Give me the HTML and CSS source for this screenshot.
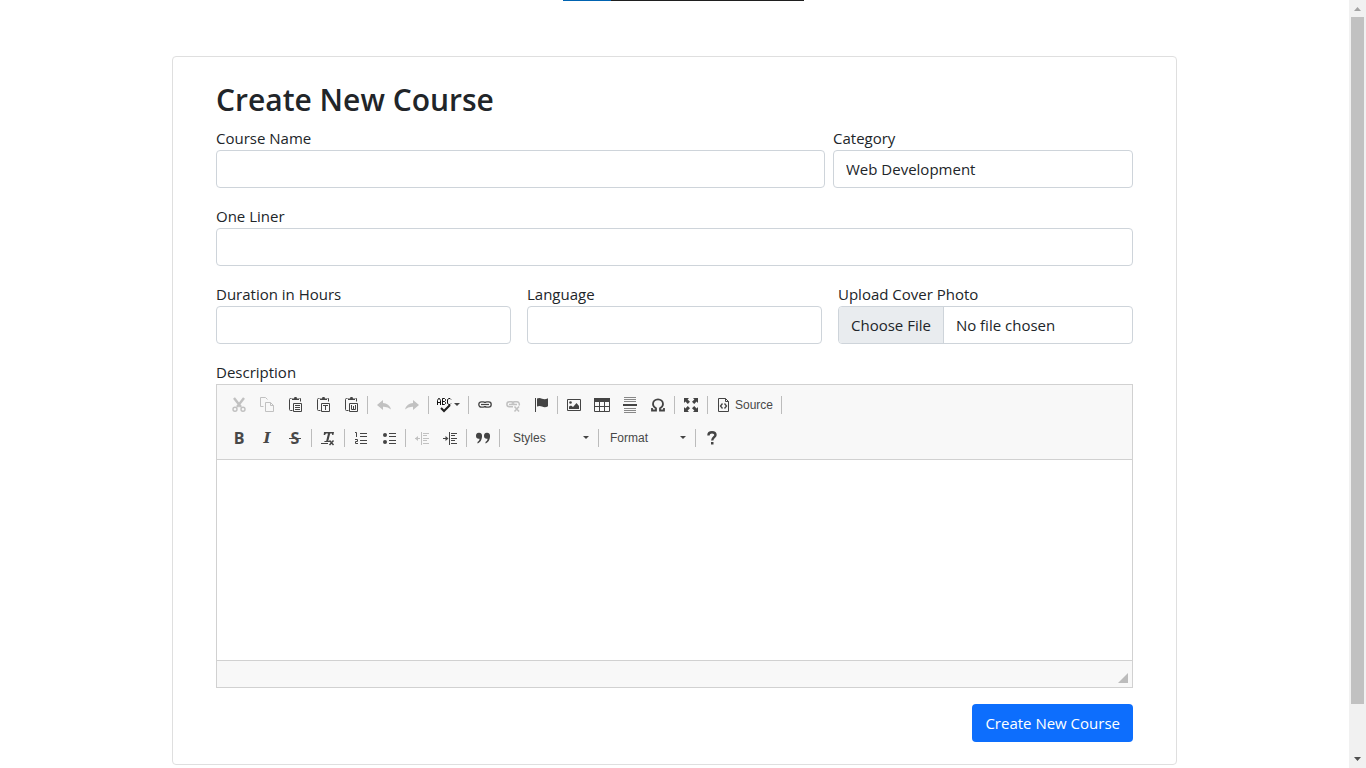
FILE: index.html
```html
<!DOCTYPE html>
<html lang="en">
<head>
<meta charset="utf-8">
<meta name="viewport" content="width=device-width, initial-scale=1">
<title>Create New Course</title>
<link rel="stylesheet" href="styles.css">
</head>
<body>
<div class="top-strip"></div>
<main class="page">
  <form class="card">
    <h2 class="title">Create New Course</h2>
    <div class="row row-name">
      <div class="field">
        <label for="name">Course Name</label>
        <input class="control" id="name" type="text">
      </div>
      <div class="field">
        <label for="category">Category</label>
        <select class="control" id="category"><option>Web Development</option></select>
      </div>
    </div>
    <div class="row">
      <div class="field">
        <label for="liner">One Liner</label>
        <input class="control" id="liner" type="text">
      </div>
    </div>
    <div class="row row-thirds">
      <div class="field">
        <label for="duration">Duration in Hours</label>
        <input class="control" id="duration" type="text">
      </div>
      <div class="field">
        <label for="language">Language</label>
        <input class="control" id="language" type="text">
      </div>
      <div class="field">
        <label for="cover">Upload Cover Photo</label>
        <input class="control" id="cover" type="file">
      </div>
    </div>
    <div class="field">
      <label for="description">Description</label>
      <div class="editor">
        <div class="toolbar">
          <div class="tools">
            <button type="button" class="tool" aria-label="Cut" disabled><svg class="icon" viewBox="0 0 16 16"><path d="M3 1l7 9M13 1L6 10" fill="none" stroke="#444" stroke-width="2.4"/><circle cx="4" cy="12.3" r="2" fill="none" stroke="#444" stroke-width="1.4"/><circle cx="12" cy="12.3" r="2" fill="none" stroke="#444" stroke-width="1.4"/></svg></button>
            <button type="button" class="tool" aria-label="Copy" disabled><svg class="icon" viewBox="0 0 16 16"><path d="M4.500 9.500h-3v-9h5l2 2M6.500 5.500h5l3 3v6h-8zM11.500 5.500v3h3" fill="none" stroke="#444"/></svg></button>
            <button type="button" class="tool" aria-label="Paste"><svg class="icon" viewBox="0 0 16 16"><path d="M4.500 1.500h-1q-1 0-1 1v10q0 1 1 1h2M12.500 1.500h1v3" fill="none" stroke="#444"/><path d="M5 3V1.500h2L7.500 0h2L10 1.500h2V3z" fill="#444"/><path d="M6.500 6.500h8v8h-8zM8 8.500h5M8 10.500h5M8 12.500h5" fill="#f8f8f8" stroke="#444"/></svg></button>
            <button type="button" class="tool" aria-label="Paste as plain text"><svg class="icon" viewBox="0 0 16 16"><path d="M4.500 1.500h-1q-1 0-1 1v10q0 1 1 1h2M12.500 1.500h1v3" fill="none" stroke="#444"/><path d="M5 3V1.500h2L7.500 0h2L10 1.500h2V3z" fill="#444"/><path d="M6.500 6.500h8v8h-8zM8 8.500h5M10.500 8v5" fill="#f8f8f8" stroke="#444"/></svg></button>
            <button type="button" class="tool" aria-label="Paste from Word"><svg class="icon" viewBox="0 0 16 16"><path d="M4.500 1.500h-1q-1 0-1 1v10q0 1 1 1h2M12.500 1.500h1v3" fill="none" stroke="#444"/><path d="M5 3V1.500h2L7.500 0h2L10 1.500h2V3z" fill="#444"/><path d="M6.500 6.500h8v8h-8z" fill="#f8f8f8" stroke="#444"/><path d="M8.500 8v4.500h4V8M10.500 9v3" fill="none" stroke="#444"/></svg></button>
            <span class="sep"></span>
            <button type="button" class="tool" aria-label="Undo" disabled><svg class="icon" viewBox="0 0 16 16"><path d="M1 8l6-5v3q6 0 8 6.500Q12 9.500 7 9.800V13z" fill="#444"/></svg></button>
            <button type="button" class="tool" aria-label="Redo" disabled><svg class="icon" viewBox="0 0 16 16"><path d="M15 8L9 3v3q-6 0-8 6.500Q4 9.500 9 9.800V13z" fill="#444"/></svg></button>
            <span class="sep"></span>
            <button type="button" class="tool tool-menu" aria-label="Spell check"><svg class="icon" viewBox="0 0 16 16"><path d="M.5 8V3.500l1-2h1l1 2V8M1 5.500h2M5.500 8V1.500h2l1 1v1l-1 1h-2m2 0l1 1v1l-1 1h-2M14 2.500l-1-1h-1l-1.500 1v4l1.500 1h1l1-1" fill="none" stroke="#111"/><path d="M4 11l3 3 6-6" fill="none" stroke="#222" stroke-width="2"/></svg><svg class="caret" viewBox="0 0 6 4"><path d="M0 0h6L3 3z" fill="#444"/></svg></button>
            <span class="sep"></span>
            <button type="button" class="tool" aria-label="Link"><svg class="icon" viewBox="0 0 16 16"><rect x="1.800" y="4.800" width="7" height="5.400" rx="2.600" fill="none" stroke="#444" stroke-width="1.300"/><rect x="7.200" y="4.800" width="7" height="5.400" rx="2.600" fill="none" stroke="#444" stroke-width="1.300"/><path d="M4 7.500h8" stroke="#f8f8f8" stroke-width="3"/><path d="M4 7.500h8" stroke="#444" stroke-width="1.200"/></svg></button>
            <button type="button" class="tool" aria-label="Unlink" disabled><svg class="icon" viewBox="0 0 16 16"><path d="M8 9.800H4.400a2.500 2.500 0 010-5h2.200a2.500 2.500 0 012.300 1.700M7 6.500a2.500 2.500 0 012.300-1.700h2.200a2.500 2.500 0 012.500 3.700M4 7.400h8" fill="none" stroke="#444" stroke-width="1.500"/><path d="M9.500 9.500l4.500 5M14 9.500l-4.500 5" stroke="#444" stroke-width="1.500"/></svg></button>
            <button type="button" class="tool" aria-label="Anchor"><svg class="icon" viewBox="0 0 16 16"><path d="M2 1h1v14H2zM4 1.500q2.500-1.200 5 .3 3 1.200 6-.5v8q-3 1.600-6 .2-2.500-1.200-5 0z" fill="#444"/></svg></button>
            <span class="sep"></span>
            <button type="button" class="tool" aria-label="Image"><svg class="icon" viewBox="0 0 16 16"><path d="M1.500 2.500h13v11h-13z" fill="none" stroke="#444"/><path d="M3 12V9.500l2-1 2 1.500 3.500-4L13 9v3z" fill="#444"/><circle cx="4.500" cy="5.500" r="1.300" fill="#444"/></svg></button>
            <button type="button" class="tool" aria-label="Table"><svg class="icon" viewBox="0 0 16 16"><path d="M0 1h16v4H0z" fill="#444"/><path d="M.5 4.500h15v10H.5zM5.500 5v9M10.500 5v9M1 9.500h14" fill="none" stroke="#444"/></svg></button>
            <button type="button" class="tool" aria-label="Horizontal line"><svg class="icon" viewBox="0 0 16 16"><path d="M2 .5h12M2 2.500h12M2 4.500h12M2 11.500h12M2 13.500h12M2 15.500h12" stroke="#888"/><path d="M1 7h14v2H1z" fill="#444"/></svg></button>
            <button type="button" class="tool" aria-label="Special character"><svg class="icon" viewBox="0 0 16 16"><path d="M2 11v2.500h4v-2.200C3.700 10 3 8.500 3 7c0-2.800 2.200-4.700 5-4.700S13 4.200 13 7c0 1.500-.7 3-3 4.300v2.200h4V11" fill="none" stroke="#444" stroke-width="1.800"/></svg></button>
            <span class="sep"></span>
            <button type="button" class="tool" aria-label="Maximize"><svg class="icon" viewBox="0 0 16 16"><path d="M1 1h5L4.600 2.400 7 4.800 4.800 7 2.400 4.600 1 6zM15 1v5l-1.400-1.400L11.200 7 9 4.800l2.400-2.400L10 1zM1 15v-5l1.400 1.400L4.800 9 7 11.200l-2.400 2.400L6 15zM15 15h-5l1.400-1.400L9 11.200 11.200 9l2.400 2.400L15 10z" fill="#444"/></svg></button>
            <span class="sep"></span>
            <button type="button" class="tool tool-text"><svg class="icon" viewBox="0 0 16 16"><path d="M2.500 1.500h7l3 3v10h-10zM9.500 1.500v3h3" fill="none" stroke="#444"/><path d="M6.500 6.500L4.500 9l2 2.500M8.500 6.500l2 2.500-2 2.500" fill="none" stroke="#444" stroke-width="1.300"/></svg>Source</button>
            <span class="sep"></span>
          </div>
          <div class="tools">
            <button type="button" class="tool glyph">B</button>
            <button type="button" class="tool glyph italic">I</button>
            <button type="button" class="tool glyph"><span class="strike">S</span></button>
            <span class="sep"></span>
            <button type="button" class="tool" aria-label="Remove format"><svg class="icon" viewBox="0 0 16 16"><path d="M4 2h10l-.6 3h-1.200L12 3.500h-1.800L8.300 11H10l-.2 1H4.300l.2-1h1.700L8 3.500H6L5 5H3.700zM1 13h7v1H1z" fill="#444"/><path d="M9.500 10.500l4 4.500M13.500 10.500l-4 4.500" stroke="#444" stroke-width="1.500"/></svg></button>
            <span class="sep"></span>
            <button type="button" class="tool" aria-label="Numbered list"><svg class="icon" viewBox="0 0 16 16"><path d="M7 3.500h7M7 6.500h7M7 10.500h7M7 13.500h7M2 2.500h1.500V7M2 9.500h2.500v2h-2v2H5" fill="none" stroke="#444"/></svg></button>
            <button type="button" class="tool" aria-label="Bulleted list"><svg class="icon" viewBox="0 0 16 16"><circle cx="4" cy="5" r="2" fill="#444"/><circle cx="4" cy="12" r="2" fill="#444"/><path d="M8 3.500h7M8 6.500h7M8 10.500h7M8 13.500h7" stroke="#444"/></svg></button>
            <span class="sep"></span>
            <button type="button" class="tool" aria-label="Decrease indent" disabled><svg class="icon" viewBox="0 0 16 16"><path d="M7.500 2v13M9 3.500h6M9 5.500h4M9 8.500h6M9 10.500h4M9 13.500h6M1 8.500h5" stroke="#444"/><path d="M1 8.500L4 6v5z" fill="#444"/></svg></button>
            <button type="button" class="tool" aria-label="Increase indent"><svg class="icon" viewBox="0 0 16 16"><path d="M7.500 2v13M9 3.500h6M9 5.500h4M9 8.500h6M9 10.500h4M9 13.500h6M1 8.500h4" stroke="#444"/><path d="M6.500 8.500l-3-2.500v5z" fill="#444"/></svg></button>
            <span class="sep"></span>
            <button type="button" class="tool" aria-label="Block quote"><svg class="icon" viewBox="0 0 16 16"><path d="M1 6a3 3 0 016-.5c.3 3.500-1.500 7-4.500 8V12C4 11 4.500 10 4.500 8.700 2.500 9.200 1 8 1 6zM9 6a3 3 0 016-.5c.3 3.500-1.500 7-4.500 8V12c1.500-1 2-2 2-3.300C10.500 9.200 9 8 9 6z" fill="#444"/></svg></button>
            <span class="sep"></span>
            <span class="combo"><select aria-label="Styles"><option>Styles</option></select><svg class="caret" viewBox="0 0 6 4"><path d="M0 0h6L3 3z" fill="#444"/></svg></span>
            <span class="sep"></span>
            <span class="combo combo-format"><select aria-label="Format"><option>Format</option></select><svg class="caret" viewBox="0 0 6 4"><path d="M0 0h6L3 3z" fill="#444"/></svg></span>
            <span class="sep"></span>
            <button type="button" class="tool" aria-label="About"><svg class="icon" viewBox="0 0 16 16"><path d="M4.500 5.500V5C4.500 3 6 2.200 8 2.200S11.500 3 11.500 5c0 2-3.300 2.500-3.300 5.500" fill="none" stroke="#444" stroke-width="2.400"/><path d="M7 12h2.500v2.500H7z" fill="#444"/></svg></button>
          </div>
        </div>
        <textarea class="editor-text" id="description"></textarea>
        <div class="editor-foot"><svg class="grip" viewBox="0 0 10 10"><path d="M10 0v10H0z" fill="#bcbcbc"/></svg></div>
      </div>
    </div>
    <button type="submit" class="submit">Create New Course</button>
  </form>
</main>
<div class="scrollbar" aria-hidden="true">
  <svg class="arrow" viewBox="0 0 17 17"><path d="M5 11h7L8.500 7z" fill="#a3a3a3"/></svg>
  <div class="thumb"></div>
  <svg class="arrow" viewBox="0 0 17 17"><path d="M5 6h7l-3.500 4z" fill="#505050"/></svg>
</div>
</body>
</html>
```

FILE: styles.css
```css
* { box-sizing: border-box; }
body {
  margin: 0;
  padding-right: 17px;
  background: #fff;
  color: #212529;
  font: 15px/24px "Open Sans", "Noto Sans", sans-serif;
}
.top-strip {
  position: absolute;
  top: 0;
  left: 50%;
  width: 241px;
  height: 1px;
  margin-left: -120px;
  background: linear-gradient(to right, #0063b1 48px, #1f1f1f 48px);
}
.page { padding-top: 56px; }
.card {
  display: flex;
  flex-direction: column;
  width: 74.5%;
  margin: 0 auto;
  padding: 24px 43px 22px;
  border: 1px solid #dfdfdf;
  border-radius: 4px;
}
.title {
  margin: 0 0 7px;
  font-size: 30px;
  font-weight: 600;
  line-height: 38px;
}
.row { display: grid; margin-bottom: 16px; }
.row-name { grid-template-columns: 67fr 33fr; gap: 8px; }
.row-thirds { grid-template-columns: repeat(3, 1fr); gap: 16px; }
.field { display: flex; flex-direction: column; min-width: 0; }
.control {
  width: 100%;
  height: 38px;
  padding: 6px 12px;
  border: 1px solid #ced4da;
  border-radius: 4px;
  background: #fff;
  color: #212529;
  font: inherit;
  appearance: none;
}
.control::file-selector-button {
  height: 36px;
  margin: -6px 12px -6px -12px;
  padding: 6px 12px;
  border: 0;
  border-right: 1px solid #ced4da;
  background: #e9ecef;
  color: #212529;
  font: inherit;
}
.editor { border: 1px solid #d1d1d1; }
.toolbar {
  display: flex;
  flex-direction: column;
  gap: 5px;
  padding: 6px 8px 7px;
  border-bottom: 1px solid #d1d1d1;
  background: #f8f8f8;
}
.tools { display: flex; align-items: center; height: 28px; }
.tool {
  display: flex;
  align-items: center;
  height: 28px;
  padding: 0 6px;
  border: 0;
  background: none;
  color: #484848;
  font: 12px/16px "Liberation Sans", Arial, sans-serif;
}
.tool:disabled { opacity: 0.3; }
.tool-menu { gap: 1px; }
.tool-text { gap: 3px; }
.icon { width: 16px; height: 16px; }
.caret { width: 6px; height: 4px; }
.glyph { justify-content: center; width: 28px; font: bold 16px/16px "Open Sans", sans-serif; }
.italic { font-family: "DejaVu Serif", serif; font-style: italic; font-size: 15px; }
.strike {
  padding: 0 2px;
  background: linear-gradient(#484848, #484848) center / 100% 1px no-repeat;
}
.sep { width: 1px; height: 18px; margin: 0 2px; background: #bcbcbc; }
.combo { display: flex; align-items: center; width: 94px; padding: 0 7px 0 11px; }
.combo-format { width: 92px; padding-left: 9px; }
.combo select {
  flex: 1;
  min-width: 0;
  padding: 0;
  border: 0;
  background: none;
  color: #484848;
  font: 12px/16px "Liberation Sans", Arial, sans-serif;
  appearance: none;
}
.editor-text {
  display: block;
  width: 100%;
  height: 200px;
  padding: 20px;
  border: 0;
  resize: none;
}
.editor-foot {
  display: flex;
  justify-content: flex-end;
  align-items: flex-end;
  height: 27px;
  padding: 4px;
  border-top: 1px solid #d1d1d1;
  background: #f8f8f8;
}
.grip { width: 10px; height: 10px; }
.submit {
  align-self: flex-end;
  height: 38px;
  margin-top: 16px;
  padding: 0 13px;
  border: 0;
  border-radius: 4px;
  background: #0d6efd;
  color: #fff;
  font: inherit;
}
.scrollbar {
  position: fixed;
  top: 0;
  right: 0;
  bottom: 0;
  display: flex;
  flex-direction: column;
  width: 17px;
  background: #f1f1f1;
}
.arrow { flex: none; width: 17px; height: 17px; }
.thumb {
  flex: none;
  width: 13px;
  height: calc((100% - 34px) * 0.936);
  margin: 0 2px auto;
  background: #c1c1c1;
}
```
